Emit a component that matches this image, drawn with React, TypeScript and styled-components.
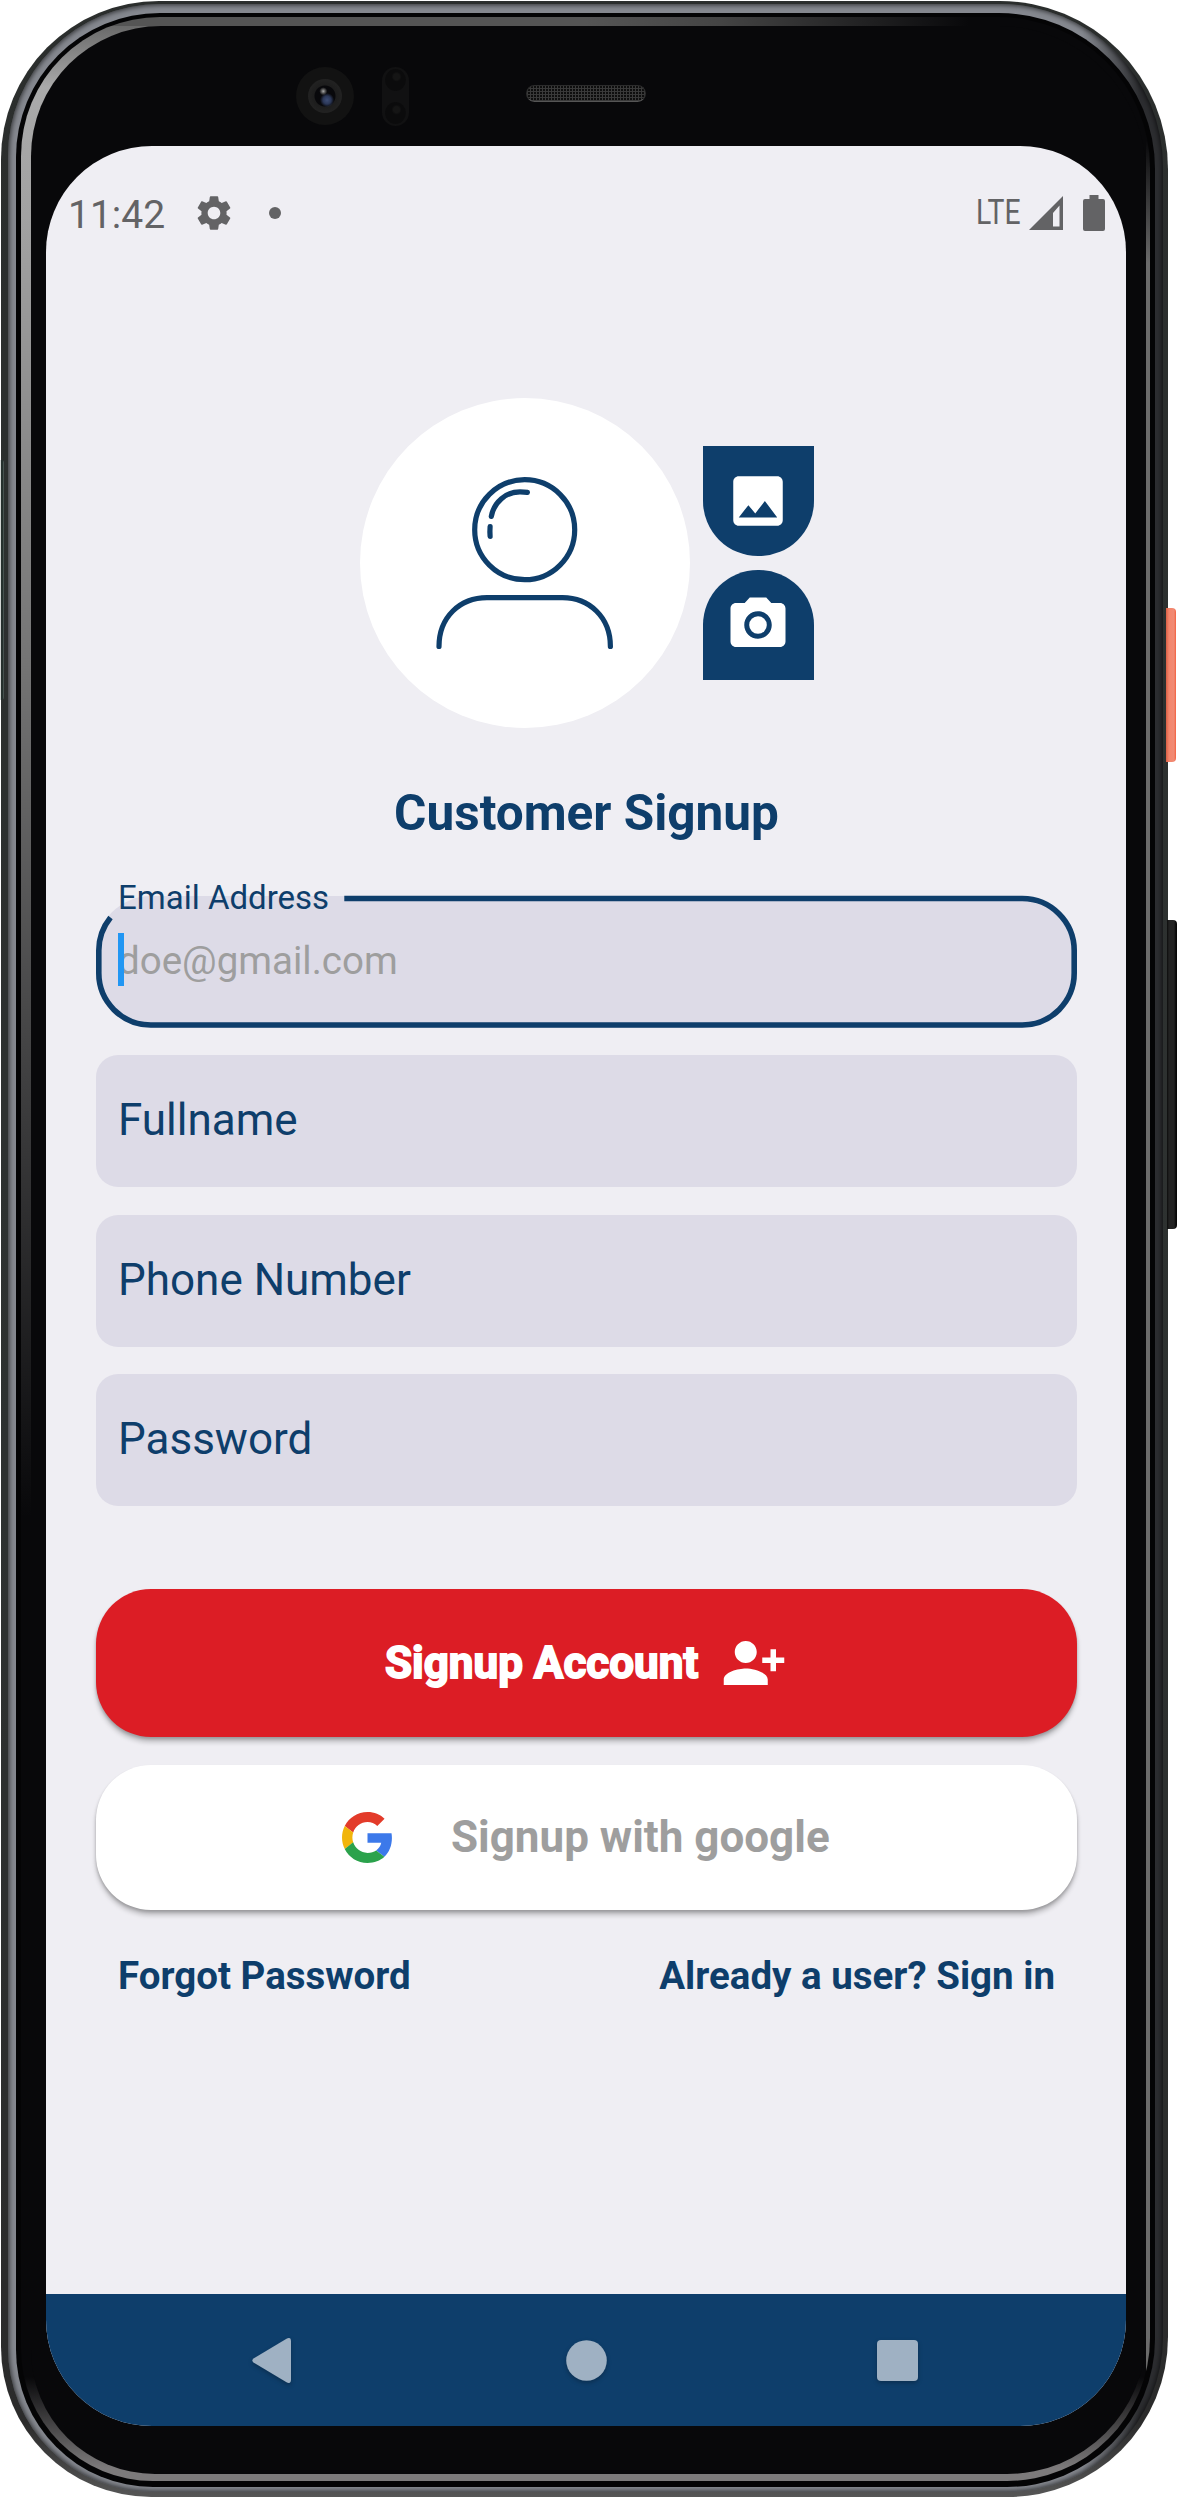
import React from "react";
import styled, { createGlobalStyle, css } from "styled-components";
import { MdCameraAlt, MdImage, MdPersonAddAlt1, MdSettings } from "react-icons/md";

const navy = "#0e3e6b";
const page = "#efeef3";
const fill = "#dddbe7";
const statusInk = "#636365";

const GlobalStyle = createGlobalStyle`
  * { box-sizing: border-box; }
  body { margin: 0; background: #fff; font-family: Roboto, "Liberation Sans", sans-serif; }
`;

const Stage = styled.main`
  position: relative;
  width: 1178px;
  height: 2498px;
  overflow: hidden;
`;

/* Phone body: nested shells, one for each ring of the metal frame */
const Body = styled.div`
  width: 1167px;
  height: 2496px;
  padding: 3px 5px 5px 7px;
  margin: 1px 0 0 1px;
  border-radius: 158px 168px 160px 150px;
  background: linear-gradient(180deg, #2b2e2d 0%, #2e3231 60%, #2b2b2b 97%, #565656 100%);
`;

const Metal = styled.div`
  height: 100%;
  padding: 9px 8px 5px 8px;
  border-radius: 152px 163px 155px 144px;
  background: linear-gradient(90deg, #85888f 0, #85888f 93%, #2c2d30 98%);
  box-shadow: inset 0 0 5px 1px rgba(0, 0, 0, 0.65);
`;

const Groove = styled.div`
  height: 100%;
  padding: 4px 5px 6px 5px;
  border-radius: 144px 156px 148px 137px;
  background: #040405;
`;

const Bevel = styled.div`
  height: 100%;
  padding: 9px 4px 7px 10px;
  border-radius: 139px 151px 143px 132px;
  background: linear-gradient(90deg, #555 50%, #444 62%, transparent 84%) 0 0 / 100% 9px no-repeat,
    linear-gradient(180deg, transparent 5%, #6b6b6b 10%, #6b6b6b 95%, #4b4b4b 100%) 100% 0 / 4px 100% no-repeat,
    linear-gradient(180deg, transparent 20%, #7c7a7b 90%) 0 100% / 100% 130px no-repeat,
    linear-gradient(180deg, #606060 0, #aaa 70px, #a2a2a2 200px, #757575 640px, #08080a 1500px) 0 0 / 300px 100% no-repeat,
    #08080a;
`;

const Glass = styled.div`
  display: flex;
  flex-direction: column;
  height: 100%;
  padding-left: 15px;
  border-radius: 130px 147px 139px 124px;
  background: #08080a;
`;

const Forehead = styled.div`
  display: flex;
  align-items: flex-start;
  flex: none;
  height: 120px;
  padding: 41px 0 0 250px;
`;

const Lens = styled.div`
  display: grid;
  place-items: center;
  width: 58px;
  height: 58px;
  border-radius: 50%;
  background: #121212;
`;

const LensRing = styled.div`
  width: 34px;
  height: 34px;
  border-radius: 50%;
  background: radial-gradient(circle at 45% 36%, #aaa 0, #555 2px, transparent 4px),
    radial-gradient(circle at 56% 62%, #3d4d75 0, #2b3757 4px, transparent 7px),
    radial-gradient(circle, #08080b 0 10px, #1d1d1d 11px, #222 17px);
`;

const Sensor = styled.div`
  display: flex;
  flex-direction: column;
  justify-content: space-between;
  align-items: center;
  width: 27px;
  height: 59px;
  margin-left: 28px;
  padding: 2px;
  border-radius: 14px;
  background: #111112;
`;

const SensorEye = styled.div`
  width: 21px;
  height: 22px;
  border-radius: 50%;
  background: radial-gradient(circle at 55% 35%, #151515 0 3px, #0b0b0c 5px);
`;

const Speaker = styled.div`
  width: 120px;
  height: 17px;
  margin: 18px 0 0 117px;
  border: 1.5px solid #2c2c2c;
  border-bottom-color: #555;
  border-radius: 9px;
  background: repeating-linear-gradient(90deg, #3a3a3a 0 1px, transparent 1px 3px),
    repeating-linear-gradient(0deg, #383838 0 1px, #0e0e0e 1px 3px);
`;

const Screen = styled.div`
  display: flex;
  flex: none;
  flex-direction: column;
  width: 1080px;
  height: 2280px;
  overflow: hidden;
  border-radius: 106px;
  background: ${page};
`;

const SideKey = styled.div<{ $top: number; $height: number; $power?: boolean }>`
  position: absolute;
  top: ${(p) => p.$top}px;
  left: ${(p) => (p.$power ? 1166 : 1167)}px;
  width: 10px;
  height: ${(p) => p.$height}px;
  border-radius: 0 4px 4px 0;
  background: ${(p) =>
    p.$power
      ? "linear-gradient(90deg, #d95f45 0, #f5856b 3px, #f08b75 8px, #f4603f 10px)"
      : "linear-gradient(90deg, #0b0b0b 0, #222 2px, #222 7px, #070707 9px)"};
`;

const AntennaGap = styled.div`
  position: absolute;
  top: 460px;
  left: 0;
  width: 4px;
  height: 240px;
  border-radius: 0 3px 3px 0;
  background: linear-gradient(90deg, #cfd3d1 1px, #25302d 1px 3px, #46524f 3px);
`;

const StatusBar = styled.header`
  display: flex;
  flex: none;
  align-items: center;
  height: 134px;
  padding: 0 21px 0 22px;
  color: ${statusInk};
  svg { display: block; flex: none; }
`;

const Clock = styled.span`
  font-size: 39px;
  line-height: 48px;
  margin-top: 4px;
  width: 125px;
`;

const Dot = styled.i`
  width: 12px;
  height: 12px;
  margin-left: 34px;
  border-radius: 50%;
  background: ${statusInk};
`;

const Network = styled.span`
  width: 48px;
  margin-left: auto;
  font-size: 35px;
  line-height: 42px;
  span { display: inline-block; transform: translateX(-2px) scaleX(0.81); transform-origin: 0 50%; }
`;

const StatusGlyph = styled.svg<{ $gap: number }>`
  margin-left: ${(p) => p.$gap}px;
`;

const Content = styled.section`
  display: flex;
  flex-direction: column;
  flex: 1;
  padding: 118px 49px 0 50px;
`;

const AvatarRow = styled.div`
  display: flex;
  align-items: center;
  gap: 13px;
  margin-left: 264px;
`;

const Avatar = styled.div`
  width: 330px;
  height: 330px;
  border-radius: 50%;
  background: #fff;
  svg { display: block; }
`;

const Sources = styled.div`
  display: flex;
  flex-direction: column;
  gap: 14px;
`;

const SourceButton = styled.button<{ $round: "top" | "bottom" }>`
  display: grid;
  place-items: center;
  width: 110.5px;
  height: 110px;
  padding: 0;
  border: 0;
  color: #fff;
  background: ${navy};
  border-radius: ${(p) => (p.$round === "top" ? "55px 55px 0 0" : "0 0 55px 55px")};
`;

const Title = styled.h1`
  margin: 55px 0 0;
  font-size: 49.5px;
  line-height: 60px;
  font-weight: 700;
  text-align: center;
  color: ${navy};
`;

const Fields = styled.div`
  display: flex;
  flex-direction: column;
  gap: 27.5px;
  margin-top: 52.5px;
`;

const Field = styled.label<{ $active?: boolean }>`
  position: relative;
  display: flex;
  align-items: center;
  height: 132px;
  padding: 0 22px 1.5px;
  background: ${fill};
  color: ${navy};
  font-size: 44px;
  border-radius: ${(p) => (p.$active ? 55 : 22)}px;
  ${(p) => p.$active && css`padding-bottom: 3px; font-size: 38.5px; color: #9e9e9e;`}
`;

const Outline = styled.svg`
  position: absolute;
  inset: -3px 0 0 0;
  overflow: visible;
`;

const FloatingLabel = styled.span`
  position: absolute;
  top: -18px;
  left: 22px;
  font-size: 33px;
  line-height: 40px;
  color: ${navy};
`;

const Caret = styled.i`
  position: absolute;
  left: 22px;
  top: 37.5px;
  width: 6px;
  height: 52.5px;
  background: #2196f3;
`;

const PillButton = styled.button<{ $primary?: boolean }>`
  display: flex;
  align-items: center;
  width: 981px;
  height: ${(p) => (p.$primary ? 148.5 : 145.5)}px;
  margin-top: ${(p) => (p.$primary ? 82.5 : 27.5)}px;
  padding: 0 0 0 ${(p) => (p.$primary ? 289 : 246)}px;
  border: 0;
  border-radius: 55px;
  font: 700 44px Roboto, "Liberation Sans", sans-serif;
  color: ${(p) => (p.$primary ? "#fff" : "#9e9e9e")};
  background: ${(p) => (p.$primary ? "#dc1d25" : "#fff")};
  box-shadow: 0 5px 5px rgba(0, 0, 0, 0.22), 0 2px 3px rgba(0, 0, 0, 0.18);
  ${(p) => p.$primary && css`-webkit-text-stroke: 1.8px #fff;`}
  svg { display: block; flex: none; stroke: none; }
`;

const ButtonText = styled.span<{ $width: number }>`
  width: ${(p) => p.$width}px;
  text-align: left;
  white-space: nowrap;
`;

const Links = styled.div`
  display: flex;
  justify-content: space-between;
  margin-top: 43px;
  padding: 0 22px;
`;

const TextLink = styled.a`
  font-size: 38.5px;
  line-height: 46px;
  font-weight: 700;
  color: ${navy};
`;

const NavBar = styled.nav`
  display: flex;
  flex: none;
  align-items: center;
  justify-content: space-between;
  height: 132px;
  padding: 0 208px 0 206px;
  background: ${navy};
  svg { display: block; filter: drop-shadow(0 2px 2px rgba(0, 0, 0, 0.25)); }
  svg:nth-child(2) { margin-left: 4px; }
`;

const PersonDrawing = () => (
  <svg width="330" height="330" viewBox="360 398 330 330" fill="none" stroke={navy} strokeWidth="5.2" strokeLinecap="round">
    <circle cx="524.7" cy="529.7" r="50" />
    <path d="M491.3 516.4C494 502 506 491.8 520 491.8Q524 491.8 527.4 492.4" />
    <path d="M490.1 526.6Q489.7 531.5 490.1 536.4" />
    <path d="M439 646.5C439 617 460 597.6 487 597.6H562.5C589 597.6 610.4 617 610.4 646.5" />
  </svg>
);

const GoogleMark = () => (
  <svg width="51" height="51" viewBox="0 0 48 48">
    <path fill="#e33b2a" d="M24 9.5c3.54 0 6.71 1.22 9.21 3.6l6.85-6.85C35.9 2.38 30.47 0 24 0 14.62 0 6.51 5.38 2.56 13.22l7.98 6.19C12.43 13.72 17.74 9.5 24 9.5z" />
    <path fill="#3c79ea" d="M46.98 24.55c0-1.57-.15-3.09-.38-4.55H24v9.02h12.94c-.58 2.96-2.26 5.48-4.78 7.18l7.73 6c4.51-4.18 7.09-10.36 7.09-17.65z" />
    <path fill="#f1b50b" d="M10.53 28.59c-.48-1.45-.76-2.99-.76-4.59s.27-3.14.76-4.59l-7.98-6.19C.92 16.46 0 20.12 0 24c0 3.88.92 7.54 2.56 10.78l7.97-6.19z" />
    <path fill="#2ba24c" d="M24 48c6.48 0 11.93-2.13 15.89-5.81l-7.73-6c-2.15 1.45-4.92 2.3-8.16 2.3-6.26 0-11.57-4.22-13.47-9.91l-7.98 6.19C6.51 42.62 14.62 48 24 48z" />
  </svg>
);

export default function App() {
  return (
    <Stage>
      <GlobalStyle />
      <Body>
        <Metal>
          <Groove>
            <Bevel>
              <Glass>
                <Forehead>
                  <Lens><LensRing /></Lens>
                  <Sensor><SensorEye /><SensorEye /></Sensor>
                  <Speaker />
                </Forehead>
                <Screen>
                  <StatusBar>
                    <Clock>11:42</Clock>
                    <MdSettings size={42} />
                    <Dot />
                    <Network><span>LTE</span></Network>
                    <StatusGlyph $gap={3} width="34" height="34" viewBox="0 0 34 34">
                      <path fillRule="evenodd" fill={statusInk} d="M34 0V34H0ZM30.5 9.5L24 17V30.5H30.5Z" />
                    </StatusGlyph>
                    <StatusGlyph $gap={20} width="22" height="36" viewBox="0 0 22 36">
                      <path fill={statusInk} d="M6.5 0H15.5V4H20Q22 4 22 6V34Q22 36 20 36H2Q0 36 0 34V6Q0 4 2 4H6.5Z" />
                    </StatusGlyph>
                  </StatusBar>
                  <Content>
                    <AvatarRow>
                      <Avatar><PersonDrawing /></Avatar>
                      <Sources>
                        <SourceButton $round="bottom"><MdImage size={66} /></SourceButton>
                        <SourceButton $round="top"><MdCameraAlt size={66} /></SourceButton>
                      </Sources>
                    </AvatarRow>
                    <Title>Customer Signup</Title>
                    <Fields>
                      <Field $active>
                        doe@gmail.com
                        <Caret />
                        <Outline width="981" height="135" viewBox="0 0 981 135" fill="none" stroke={navy} strokeWidth="5.6">
                          <path d="M248.3 5.5H926A52 52 0 0 1 978.2 57.5V79.5A52 52 0 0 1 926 132H55A52 52 0 0 1 2.8 79.5V57.5Q2.8 39 14.5 24.5" />
                        </Outline>
                        <FloatingLabel>Email Address</FloatingLabel>
                      </Field>
                      <Field>Fullname</Field>
                      <Field>Phone Number</Field>
                      <Field>Password</Field>
                    </Fields>
                    <PillButton $primary>
                      <ButtonText $width={336}>Signup Account</ButtonText>
                      <MdPersonAddAlt1 size={66} />
                    </PillButton>
                    <PillButton>
                      <ButtonText $width={109}><GoogleMark /></ButtonText>
                      <ButtonText $width={400}>Signup with google</ButtonText>
                    </PillButton>
                    <Links>
                      <TextLink>Forgot Password</TextLink>
                      <TextLink>Already a user? Sign in</TextLink>
                    </Links>
                  </Content>
                  <NavBar>
                    <svg width="39" height="45" viewBox="0 0 39 45">
                      <path fill="#9fb1c3" d="M34.5 .7Q39 -1.500 39 3V42Q39 46.500 34.5 44.300L1.500 24.500Q-.8 22.500 1.500 20.500Z" />
                    </svg>
                    <svg width="41" height="41" viewBox="0 0 41 41"><circle cx="20.5" cy="20.5" r="20.3" fill="#9fb1c3" /></svg>
                    <svg width="41" height="41" viewBox="0 0 41 41"><rect width="41" height="41" rx="4" fill="#9fb1c3" /></svg>
                  </NavBar>
                </Screen>
              </Glass>
            </Bevel>
          </Groove>
        </Metal>
      </Body>
      <AntennaGap />
      <SideKey $top={608} $height={154} $power />
      <SideKey $top={920} $height={309} />
    </Stage>
  );
}
